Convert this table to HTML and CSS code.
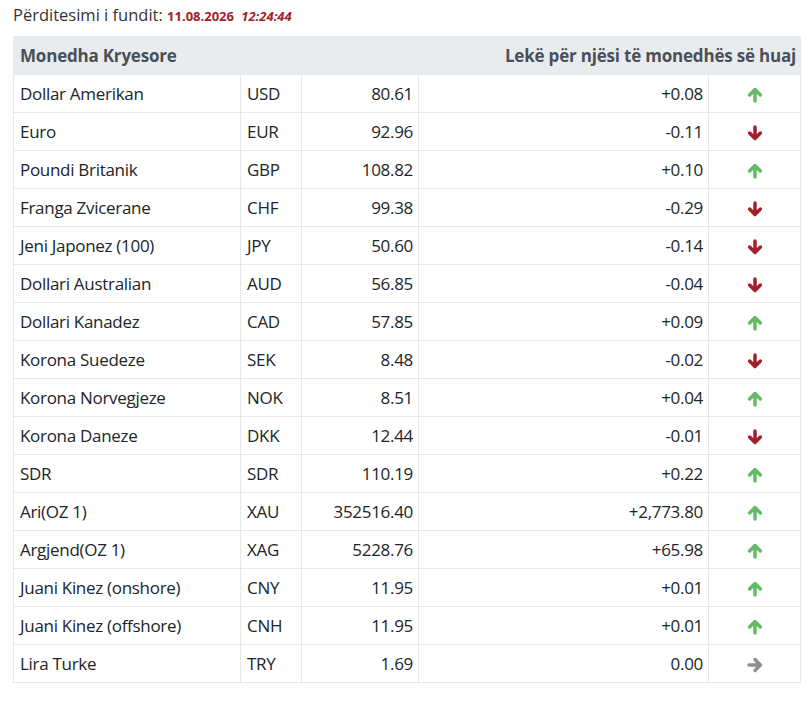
FILE: index.html
```html
<!DOCTYPE html>
<html lang="sq">
<head>
<meta charset="utf-8">
<title>Kurset e këmbimit</title>
<link rel="stylesheet" href="styles.css">
</head>
<body>
<div class="page">
  <div class="updated">Përditesimi i fundit: <span class="date">11.08.2026</span> <span class="time">12:24:44</span></div>
  <table class="rates">
    <colgroup>
      <col class="c-name"><col class="c-code"><col class="c-rate"><col class="c-diff"><col class="c-icon">
    </colgroup>
    <thead>
      <tr><th colspan="3" class="left">Monedha Kryesore</th><th colspan="2" class="right">Lekë për njësi të monedhës së huaj</th></tr>
    </thead>
    <tbody>
      <tr><td>Dollar Amerikan</td><td>USD</td><td class="num">80.61</td><td class="num">+0.08</td><td class="ic"><svg class="up" viewBox="0 0 16 16"><path d="M2.6 8 L8 2.6 L13.4 8 M8 3 V14"/></svg></td></tr>
      <tr><td>Euro</td><td>EUR</td><td class="num">92.96</td><td class="num">-0.11</td><td class="ic"><svg class="down" viewBox="0 0 16 16"><path d="M2.6 8 L8 13.4 L13.4 8 M8 13 V2"/></svg></td></tr>
      <tr><td>Poundi Britanik</td><td>GBP</td><td class="num">108.82</td><td class="num">+0.10</td><td class="ic"><svg class="up" viewBox="0 0 16 16"><path d="M2.6 8 L8 2.6 L13.4 8 M8 3 V14"/></svg></td></tr>
      <tr><td>Franga Zvicerane</td><td>CHF</td><td class="num">99.38</td><td class="num">-0.29</td><td class="ic"><svg class="down" viewBox="0 0 16 16"><path d="M2.6 8 L8 13.4 L13.4 8 M8 13 V2"/></svg></td></tr>
      <tr><td>Jeni Japonez (100)</td><td>JPY</td><td class="num">50.60</td><td class="num">-0.14</td><td class="ic"><svg class="down" viewBox="0 0 16 16"><path d="M2.6 8 L8 13.4 L13.4 8 M8 13 V2"/></svg></td></tr>
      <tr><td>Dollari Australian</td><td>AUD</td><td class="num">56.85</td><td class="num">-0.04</td><td class="ic"><svg class="down" viewBox="0 0 16 16"><path d="M2.6 8 L8 13.4 L13.4 8 M8 13 V2"/></svg></td></tr>
      <tr><td>Dollari Kanadez</td><td>CAD</td><td class="num">57.85</td><td class="num">+0.09</td><td class="ic"><svg class="up" viewBox="0 0 16 16"><path d="M2.6 8 L8 2.6 L13.4 8 M8 3 V14"/></svg></td></tr>
      <tr><td>Korona Suedeze</td><td>SEK</td><td class="num">8.48</td><td class="num">-0.02</td><td class="ic"><svg class="down" viewBox="0 0 16 16"><path d="M2.6 8 L8 13.4 L13.4 8 M8 13 V2"/></svg></td></tr>
      <tr><td>Korona Norvegjeze</td><td>NOK</td><td class="num">8.51</td><td class="num">+0.04</td><td class="ic"><svg class="up" viewBox="0 0 16 16"><path d="M2.6 8 L8 2.6 L13.4 8 M8 3 V14"/></svg></td></tr>
      <tr><td>Korona Daneze</td><td>DKK</td><td class="num">12.44</td><td class="num">-0.01</td><td class="ic"><svg class="down" viewBox="0 0 16 16"><path d="M2.6 8 L8 13.4 L13.4 8 M8 13 V2"/></svg></td></tr>
      <tr><td>SDR</td><td>SDR</td><td class="num">110.19</td><td class="num">+0.22</td><td class="ic"><svg class="up" viewBox="0 0 16 16"><path d="M2.6 8 L8 2.6 L13.4 8 M8 3 V14"/></svg></td></tr>
      <tr><td>Ari(OZ 1)</td><td>XAU</td><td class="num">352516.40</td><td class="num">+2,773.80</td><td class="ic"><svg class="up" viewBox="0 0 16 16"><path d="M2.6 8 L8 2.6 L13.4 8 M8 3 V14"/></svg></td></tr>
      <tr><td>Argjend(OZ 1)</td><td>XAG</td><td class="num">5228.76</td><td class="num">+65.98</td><td class="ic"><svg class="up" viewBox="0 0 16 16"><path d="M2.6 8 L8 2.6 L13.4 8 M8 3 V14"/></svg></td></tr>
      <tr><td>Juani Kinez (onshore)</td><td>CNY</td><td class="num">11.95</td><td class="num">+0.01</td><td class="ic"><svg class="up" viewBox="0 0 16 16"><path d="M2.6 8 L8 2.6 L13.4 8 M8 3 V14"/></svg></td></tr>
      <tr><td>Juani Kinez (offshore)</td><td>CNH</td><td class="num">11.95</td><td class="num">+0.01</td><td class="ic"><svg class="up" viewBox="0 0 16 16"><path d="M2.6 8 L8 2.6 L13.4 8 M8 3 V14"/></svg></td></tr>
      <tr><td>Lira Turke</td><td>TRY</td><td class="num">1.69</td><td class="num">0.00</td><td class="ic"><svg class="flat" viewBox="0 0 16 16"><path d="M8 2.6 L13.4 8 L8 13.4 M13 8 H2"/></svg></td></tr>
    </tbody>
  </table>
</div>
</body>
</html>
```

FILE: styles.css
```css
html, body {
  margin: 0;
  padding: 0;
  background: #ffffff;
}

body {
  font-family: "Open Sans", "Noto Sans", "Liberation Sans", sans-serif;
  color: #212529;
}

.page {
  padding: 4px 10px 0 13px;
}

.updated {
  font-size: 16.5px;
  line-height: 22px;
  color: #333333;
  margin-bottom: 9px;
}

.updated .date,
.updated .time {
  color: #a3202a;
  font-weight: 700;
  font-size: 13px;
}

.updated .time {
  font-style: italic;
  margin-left: 3px;
}

.rates {
  width: 787px;
  border-collapse: collapse;
  table-layout: fixed;
  font-size: 17px;
  letter-spacing: -0.3px;
}

.c-name { width: 227px; }
.c-code { width: 61px; }
.c-rate { width: 117px; }
.c-diff { width: 290px; }
.c-icon { width: 92px; }

.rates th {
  background: #e9ecef;
  color: #495057;
  font-weight: 700;
  height: 38px;
  padding: 0 6px;
  border: 1px solid #e9ecef;
  box-sizing: border-box;
  letter-spacing: -0.2px;
}

.rates th.left { text-align: left; }
.rates th.right { text-align: right; padding-right: 4px; }

.rates td {
  height: 38px;
  box-sizing: border-box;
  padding: 0 6px;
  border: 1px solid #e5e8eb;
  white-space: nowrap;
}

.rates td.num {
  text-align: right;
  padding-right: 5px;
}

.rates td.ic {
  text-align: center;
  padding: 0;
}

.rates svg {
  width: 16px;
  height: 16px;
  vertical-align: middle;
  fill: none;
  stroke-width: 3.5;
  stroke-linecap: round;
  stroke-linejoin: round;
}

.rates svg.up { stroke: #62bb66; }
.rates svg.down { stroke: #a3202a; }
.rates svg.flat { stroke: #8c8f92; }
```
